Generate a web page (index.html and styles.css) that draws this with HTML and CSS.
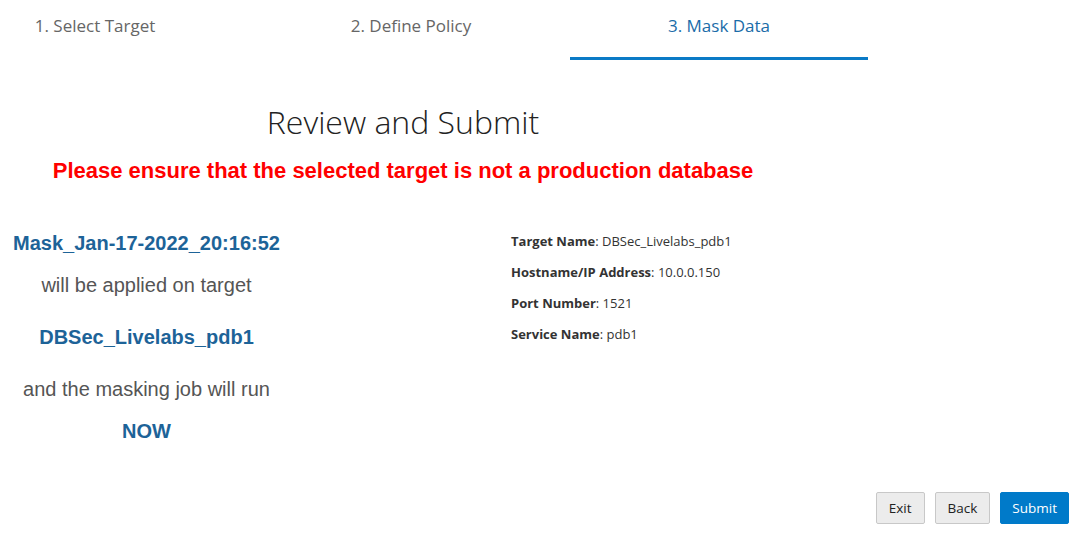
FILE: index.html
```html
<!DOCTYPE html>
<html>
<head>
<meta charset="utf-8">
<link rel="stylesheet" href="styles.css">
</head>
<body>
<div class="page">
  <div class="tabs">
    <div class="tab tab-1">1. Select Target</div>
    <div class="tab tab-2">2. Define Policy</div>
    <div class="tab tab-3 active">3. Mask Data</div>
  </div>

  <div class="header">
    <h1 class="title">Review and Submit</h1>
    <p class="warning">Please ensure that the selected target is not a production database</p>
  </div>

  <div class="body">
    <div class="summary">
      <div class="strong first">Mask_Jan-17-2022_20:16:52</div>
      <div class="plain gap-s">will be applied on target</div>
      <div class="strong gap-l">DBSec_Livelabs_pdb1</div>
      <div class="plain gap-l">and the masking job will run</div>
      <div class="strong gap-s">NOW</div>
    </div>
    <div class="details">
      <div class="row"><b>Target Name</b>: DBSec_Livelabs_pdb1</div>
      <div class="row"><b>Hostname/IP Address</b>: 10.0.0.150</div>
      <div class="row"><b>Port Number</b>: 1521</div>
      <div class="row"><b>Service Name</b>: pdb1</div>
    </div>
  </div>

  <div class="footer">
    <button class="btn">Exit</button>
    <button class="btn">Back</button>
    <button class="btn primary">Submit</button>
  </div>
</div>
</body>
</html>
```
FILE: styles.css
```css
html, body {
  margin: 0;
  padding: 0;
  background: #ffffff;
}

.page {
  width: 1080px;
  font-family: "Open Sans", "Noto Sans", sans-serif;
  color: #333333;
}

.tabs {
  display: flex;
  height: 60px;
}

.tab {
  box-sizing: border-box;
  height: 60px;
  padding-top: 15px;
  font-size: 17px;
  line-height: 22px;
  color: #666666;
  text-align: center;
  border-bottom: 3px solid transparent;
}

.tab-1 { width: 190px; }
.tab-2 { width: 298px; margin-left: 72px; }
.tab-3 { width: 298px; margin-left: 10px; }

.tab.active {
  color: #1a6ca8;
  border-bottom-color: #0a7ac6;
}

.header {
  width: 806px;
  text-align: center;
}

.title {
  margin: 42px 0 0 0;
  font-size: 32px;
  line-height: 40px;
  font-weight: 300;
  color: #222222;
}

.warning {
  margin: 16px 0 0 0;
  font-family: "Liberation Sans", Arial, sans-serif;
  font-weight: bold;
  font-size: 22px;
  line-height: 26px;
  color: #ff0000;
}

.body {
  display: flex;
  align-items: flex-start;
  margin-top: 47px;
}

.summary {
  width: 293px;
  text-align: center;
  font-family: "Liberation Sans", Arial, sans-serif;
  font-size: 20px;
  line-height: 24px;
}

.summary .strong {
  font-weight: bold;
  color: #1d6398;
}

.summary .plain {
  color: #555555;
}

.gap-s { margin-top: 18px; }
.gap-l { margin-top: 28px; }

.details {
  margin-left: 218px;
  padding-top: 1px;
  font-size: 13px;
  line-height: 18px;
  color: #333333;
}

.details .row + .row {
  margin-top: 13px;
}

.details b {
  font-weight: 700;
}

.footer {
  display: flex;
  justify-content: flex-end;
  gap: 10px;
  margin-top: 49px;
  padding-right: 11px;
}

.btn {
  box-sizing: border-box;
  height: 32px;
  padding: 0 12px;
  font-family: "Open Sans", "Noto Sans", sans-serif;
  font-size: 13.5px;
  color: #222222;
  background: #ececec;
  border: 1px solid #c8c8c8;
  border-radius: 2px;
}

.btn.primary {
  padding: 0 11px;
  background: #007ac9;
  border-color: #007ac9;
  color: #ffffff;
}
```
